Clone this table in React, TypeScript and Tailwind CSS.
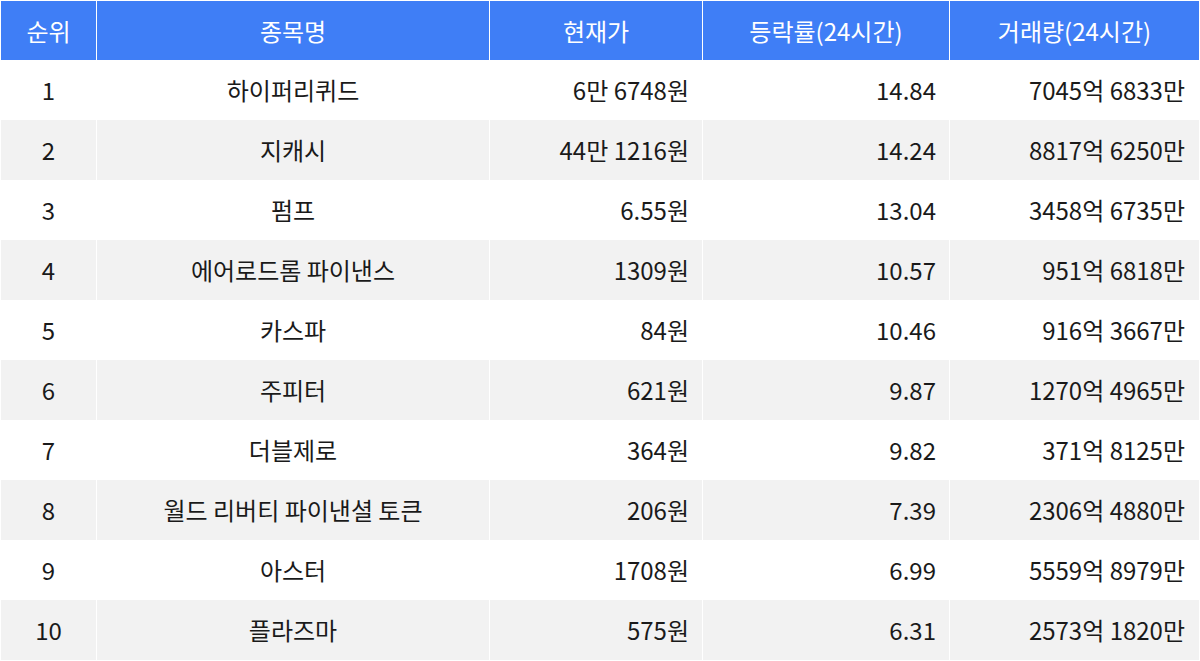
const rows = [
  { rank: 1, name: '하이퍼리퀴드', price: '6만 6748원', change: '14.84', volume: '7045억 6833만' },
  { rank: 2, name: '지캐시', price: '44만 1216원', change: '14.24', volume: '8817억 6250만' },
  { rank: 3, name: '펌프', price: '6.55원', change: '13.04', volume: '3458억 6735만' },
  { rank: 4, name: '에어로드롬 파이낸스', price: '1309원', change: '10.57', volume: '951억 6818만' },
  { rank: 5, name: '카스파', price: '84원', change: '10.46', volume: '916억 3667만' },
  { rank: 6, name: '주피터', price: '621원', change: '9.87', volume: '1270억 4965만' },
  { rank: 7, name: '더블제로', price: '364원', change: '9.82', volume: '371억 8125만' },
  { rank: 8, name: '월드 리버티 파이낸셜 토큰', price: '206원', change: '7.39', volume: '2306억 4880만' },
  { rank: 9, name: '아스터', price: '1708원', change: '6.99', volume: '5559억 8979만' },
  { rank: 10, name: '플라즈마', price: '575원', change: '6.31', volume: '2573억 1820만' },
];

const cols = 'grid grid-cols-[95px_392px_212px_246px_249px] gap-x-px';

export default function App() {
  return (
    <div
      className="w-[1200px] h-[661px] bg-white p-px pb-0 text-[24px] leading-none"
      style={{ fontFamily: '"Noto Sans CJK KR", "Noto Sans", sans-serif' }}
    >
      {/* Header */}
      <div className={`${cols} h-[59px] text-white`}>
        <div className="bg-[#3f7ef6] flex items-center justify-center">순위</div>
        <div className="bg-[#3f7ef6] flex items-center justify-center">종목명</div>
        <div className="bg-[#3f7ef6] flex items-center justify-center">현재가</div>
        <div className="bg-[#3f7ef6] flex items-center justify-center">등락률(24시간)</div>
        <div className="bg-[#3f7ef6] flex items-center justify-center">거래량(24시간)</div>
      </div>

      {/* Body */}
      {rows.map((r, i) => {
        const bg = i % 2 === 1 ? 'bg-[#f2f2f2]' : 'bg-white';
        return (
          <div key={r.rank} className={`${cols} h-[60px] text-[#1a1a1a]`}>
            <div className={`${bg} flex items-center justify-center`}>{r.rank}</div>
            <div className={`${bg} flex items-center justify-center`}>{r.name}</div>
            <div className={`${bg} flex items-center justify-end pr-[13px]`}>{r.price}</div>
            <div className={`${bg} flex items-center justify-end pr-[13px]`}>{r.change}</div>
            <div className={`${bg} flex items-center justify-end pr-[14px]`}>{r.volume}</div>
          </div>
        );
      })}
    </div>
  );
}
